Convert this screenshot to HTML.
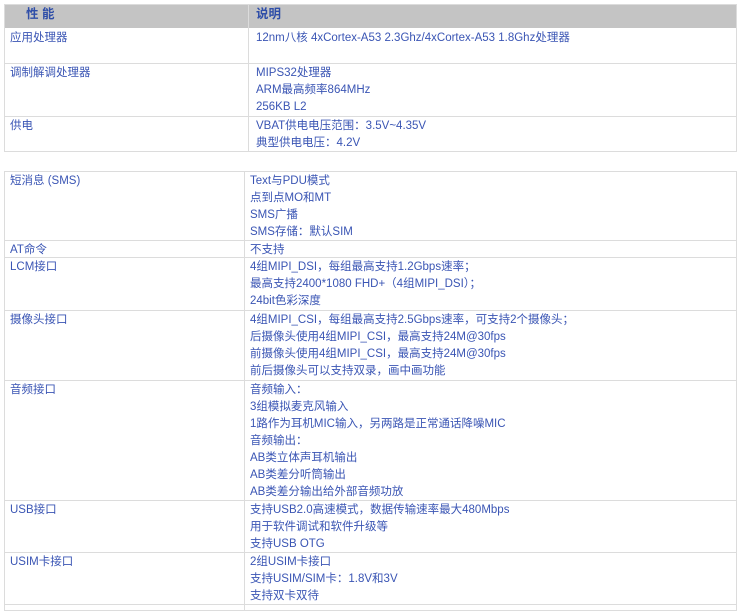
<!DOCTYPE html>
<html><head><meta charset="utf-8">
<style>
*{margin:0;padding:0;box-sizing:border-box}
body{width:744px;height:608px;background:#fff;overflow:hidden;position:relative;font-family:"Liberation Sans","Noto Sans CJK SC",sans-serif;font-size:11.5px;color:#3a55b4}
.b{position:absolute;border:1px solid #dcdcdc}
.c{position:absolute;line-height:17px;white-space:nowrap;margin-top:1px}
.h{position:absolute;background:#c4c4c4;font-weight:bold;font-size:12.5px;color:#2f4ea8;line-height:24px}
</style></head><body>
<div class="h" style="left:4px;top:4px;width:733px;height:24px"></div>
<div class="h" style="left:26px;top:2px;background:none">性 能</div>
<div class="h" style="left:256px;top:2px;background:none">说明</div>
<div class="b" style="left:4px;top:4px;width:733px;height:148px"></div>
<div class="b" style="left:248px;top:4px;width:1px;height:148px;border-width:0 0 0 1px"></div>
<div class="b" style="left:4px;top:63px;width:733px;height:1px;border-width:1px 0 0 0"></div>
<div class="b" style="left:4px;top:116px;width:733px;height:1px;border-width:1px 0 0 0"></div>
<div class="c" style="left:10px;top:29px">应用处理器</div>
<div class="c" style="left:256px;top:29px">12nm八核 4xCortex-A53 2.3Ghz/4xCortex-A53 1.8Ghz处理器</div>
<div class="c" style="left:10px;top:64px">调制解调处理器</div>
<div class="c" style="left:256px;top:64px">MIPS32处理器<br>ARM最高频率864MHz<br>256KB L2</div>
<div class="c" style="left:10px;top:117px">供电</div>
<div class="c" style="left:256px;top:117px">VBAT供电电压范围：3.5V~4.35V<br>典型供电电压：4.2V</div>
<div class="b" style="left:4px;top:171px;width:733px;height:440px"></div>
<div class="b" style="left:244px;top:171px;width:1px;height:440px;border-width:0 0 0 1px"></div>
<div class="b" style="left:4px;top:240px;width:733px;height:1px;border-width:1px 0 0 0"></div>
<div class="b" style="left:4px;top:257px;width:733px;height:1px;border-width:1px 0 0 0"></div>
<div class="b" style="left:4px;top:310px;width:733px;height:1px;border-width:1px 0 0 0"></div>
<div class="b" style="left:4px;top:380px;width:733px;height:1px;border-width:1px 0 0 0"></div>
<div class="b" style="left:4px;top:500px;width:733px;height:1px;border-width:1px 0 0 0"></div>
<div class="b" style="left:4px;top:552px;width:733px;height:1px;border-width:1px 0 0 0"></div>
<div class="b" style="left:4px;top:604px;width:733px;height:1px;border-width:1px 0 0 0"></div>
<div class="c" style="left:10px;top:172px">短消息 (SMS)</div>
<div class="c" style="left:250px;top:172px">Text与PDU模式<br>点到点MO和MT<br>SMS广播<br>SMS存储：默认SIM</div>
<div class="c" style="left:10px;top:241px">AT命令</div>
<div class="c" style="left:250px;top:241px">不支持</div>
<div class="c" style="left:10px;top:258px">LCM接口</div>
<div class="c" style="left:250px;top:258px">4组MIPI_DSI，每组最高支持1.2Gbps速率；<br>最高支持2400*1080 FHD+（4组MIPI_DSI）；<br>24bit色彩深度</div>
<div class="c" style="left:10px;top:311px">摄像头接口</div>
<div class="c" style="left:250px;top:311px">4组MIPI_CSI，每组最高支持2.5Gbps速率，可支持2个摄像头；<br>后摄像头使用4组MIPI_CSI，最高支持24M@30fps<br>前摄像头使用4组MIPI_CSI，最高支持24M@30fps<br>前后摄像头可以支持双录，画中画功能</div>
<div class="c" style="left:10px;top:381px">音频接口</div>
<div class="c" style="left:250px;top:381px">音频输入：<br>3组模拟麦克风输入<br>1路作为耳机MIC输入，另两路是正常通话降噪MIC<br>音频输出：<br>AB类立体声耳机输出<br>AB类差分听筒输出<br>AB类差分输出给外部音频功放</div>
<div class="c" style="left:10px;top:501px">USB接口</div>
<div class="c" style="left:250px;top:501px">支持USB2.0高速模式，数据传输速率最大480Mbps<br>用于软件调试和软件升级等<br>支持USB OTG</div>
<div class="c" style="left:10px;top:553px">USIM卡接口</div>
<div class="c" style="left:250px;top:553px">2组USIM卡接口<br>支持USIM/SIM卡：1.8V和3V<br>支持双卡双待</div>
</body></html>
